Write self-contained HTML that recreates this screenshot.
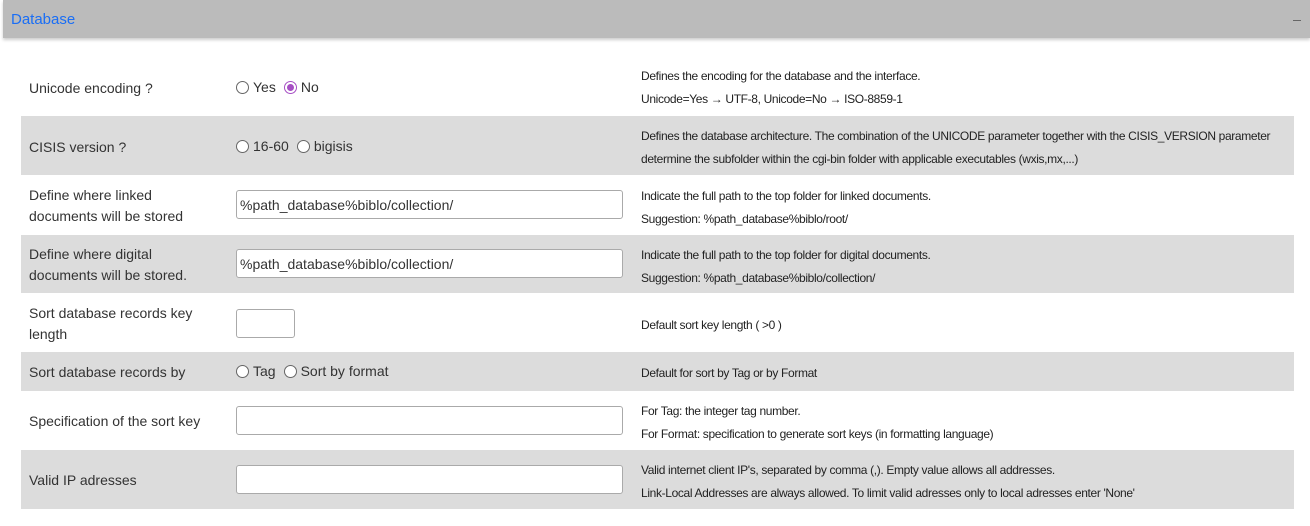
<!DOCTYPE html>
<html><head><meta charset="utf-8"><style>
body{margin:0;width:1310px;height:526px;background:#fff;font-family:"Liberation Sans",sans-serif;color:#333;overflow:hidden;position:relative}
.hdr{position:absolute;left:3px;top:0;width:1307px;height:38px;background:#bbb;box-shadow:0 2px 3px rgba(0,0,0,.2)}
.hdr span{position:absolute;left:8px;top:11px;font-size:15px;color:#1a6ef5}
.hdr i{position:absolute;right:9px;top:20px;width:8px;height:1px;background:#666}
.row{position:absolute;left:21px;width:1273px}
.g{background:#dcdcdc}
.lbl{position:absolute;left:8px;width:180px;font-size:14px;line-height:21px;padding-top:1px}
.ctl{position:absolute;left:215px;font-size:14px;display:flex;align-items:center}
.desc{position:absolute;left:620px;font-size:12px;letter-spacing:-0.35px;line-height:23px;color:#222;padding-top:1px}
.inp{width:382px;height:27px;border:1px solid #aaa;border-radius:3px;background:#fff;font-size:14px;line-height:28px;padding-left:3px;box-sizing:content-box}
.r{display:inline-block;width:13px;height:13px;border:1px solid #666;border-radius:50%;background:#fff;margin-right:4px;box-sizing:border-box;position:relative}
.r.on{border-color:#a64ec4}
.r.on:after{content:"";position:absolute;left:2px;top:2px;width:7px;height:7px;border-radius:50%;background:#a64ec4}
.ctl span.t{margin-right:8px}
</style></head><body>
<div class="hdr"><span>Database</span><i></i></div>

<div class="row" style="top:58px;height:58px">
<div class="lbl" style="top:19px">Unicode encoding ?</div>
<div class="ctl" style="top:21px"><span class="r"></span><span class="t">Yes</span><span class="r on"></span><span>No</span></div>
<div class="desc" style="top:6px">Defines the encoding for the database and the interface.<br>Unicode=Yes → UTF-8, Unicode=No → ISO-8859-1</div>
</div>

<div class="row g" style="top:116px;height:59px">
<div class="lbl" style="top:20px">CISIS version ?</div>
<div class="ctl" style="top:22px"><span class="r"></span><span class="t">16-60</span><span class="r"></span><span>bigisis</span></div>
<div class="desc" style="top:8px">Defines the database architecture. The combination of the UNICODE parameter together with the CISIS_VERSION parameter<br>determine the subfolder within the cgi-bin folder with applicable executables (wxis,mx,...)</div>
</div>

<div class="row" style="top:175px;height:60px">
<div class="lbl" style="top:9px">Define where linked documents will be stored</div>
<div class="ctl" style="top:15px"><div class="inp">%path_database%biblo/collection/</div></div>
<div class="desc" style="top:9px">Indicate the full path to the top folder for linked documents.<br>Suggestion: %path_database%biblo/root/</div>
</div>

<div class="row g" style="top:235px;height:58px">
<div class="lbl" style="top:8px">Define where digital documents will be stored.</div>
<div class="ctl" style="top:14px"><div class="inp">%path_database%biblo/collection/</div></div>
<div class="desc" style="top:8px">Indicate the full path to the top folder for digital documents.<br>Suggestion: %path_database%biblo/collection/</div>
</div>

<div class="row" style="top:293px;height:59px">
<div class="lbl" style="top:9px">Sort database records key length</div>
<div class="ctl" style="top:16px"><div class="inp" style="width:57px;padding:0"></div></div>
<div class="desc" style="top:20px">Default sort key length ( &gt;0 )</div>
</div>

<div class="row g" style="top:352px;height:39px">
<div class="lbl" style="top:9px">Sort database records by</div>
<div class="ctl" style="top:11px"><span class="r"></span><span class="t">Tag</span><span class="r"></span><span>Sort by format</span></div>
<div class="desc" style="top:9px">Default for sort by Tag or by Format</div>
</div>

<div class="row" style="top:391px;height:59px">
<div class="lbl" style="top:19px">Specification of the sort key</div>
<div class="ctl" style="top:15px"><div class="inp"></div></div>
<div class="desc" style="top:8px">For Tag: the integer tag number.<br>For Format: specification to generate sort keys (in formatting language)</div>
</div>

<div class="row g" style="top:450px;height:59px">
<div class="lbl" style="top:19px">Valid IP adresses</div>
<div class="ctl" style="top:15px"><div class="inp"></div></div>
<div class="desc" style="top:8px">Valid internet client IP's, separated by comma (,). Empty value allows all addresses.<br>Link-Local Addresses are always allowed. To limit valid adresses only to local adresses enter 'None'</div>
</div>
</body></html>
